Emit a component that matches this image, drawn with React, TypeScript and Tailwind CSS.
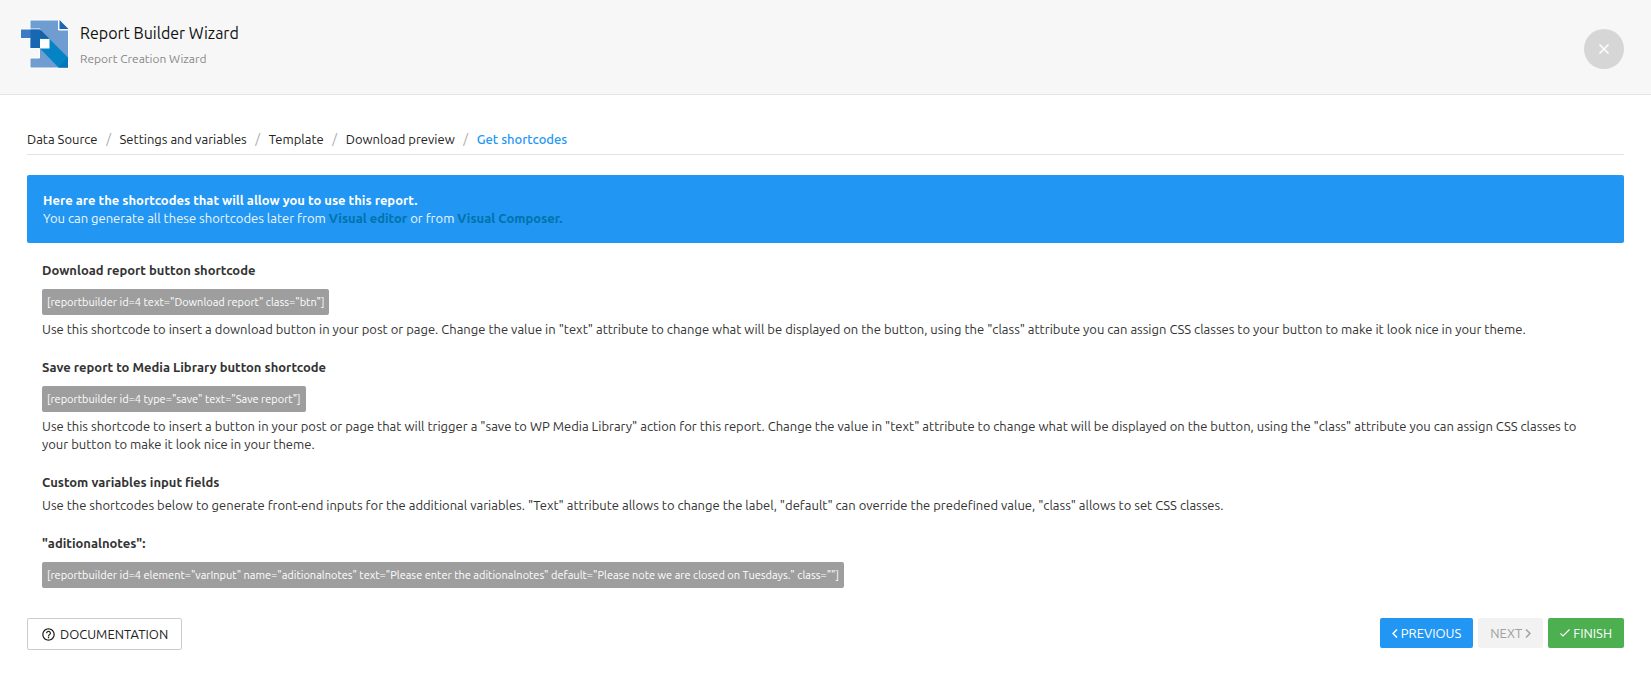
import { clsx } from 'clsx';

const steps = [
  'Data Source',
  'Settings and variables',
  'Template',
  'Download preview',
  'Get shortcodes',
];

const Logo = () => (
  <svg width="50" height="50" viewBox="0 0 50 50" className="shrink-0" aria-hidden="true">
    <path
      d="M10 1h28.500v10H48.500V49H10V39h9.500V29.500H10z"
      fill="#6f9dd1"
      stroke="#fdfeff"
      strokeWidth="1"
    />
    <path d="M39.500 1L48.500 10h-9z" fill="#1767b2" />
    <path d="M20 10.500L48 38.500v10H38.500L20 29.500z" fill="#0583c5" />
    <path d="M48 38.500v10H38.500z" fill="#0b74b8" />
    <path d="M0.500 10h19.500v9.500H0.500z" fill="#3c7cc4" stroke="#fdfeff" strokeWidth="1" />
    <path d="M10.500 10.500h9.500v18.500h-9.500z" fill="#1767b2" />
    <path d="M20 10.500l9 9h-9z" fill="#1464a3" />
    <path d="M20 20h9.500v9.500H20z" fill="#fdfeff" />
  </svg>
);

const CloseIcon = () => (
  <svg width="12" height="12" viewBox="0 0 12 12" fill="none" stroke="#fff" strokeWidth="1.500">
    <path d="M1.500 1.500l9 9M10.500 1.500l-9 9" />
  </svg>
);

const HelpIcon = () => (
  <svg width="15" height="15" viewBox="0 0 24 24" fill="#222">
    <path d="M11 18h2v-2h-2v2zm1-16C6.480 2 2 6.480 2 12s4.480 10 10 10 10-4.480 10-10S17.520 2 12 2zm0 18c-4.410 0-8-3.590-8-8s3.590-8 8-8 8 3.590 8 8-3.590 8-8 8zm0-14c-2.210 0-4 1.790-4 4h2c0-1.100.9-2 2-2s2 .9 2 2c0 2-3 1.750-3 5h2c0-2.250 3-2.500 3-5 0-2.210-1.790-4-4-4z" />
  </svg>
);

const Shortcode = ({ code }: { code: string }) => (
  <code className="inline-block rounded-xs bg-[#9e9e9e] px-[5px] py-1 font-['Ubuntu','Noto_Sans',sans-serif] text-[11px] leading-[18px] text-white">
    {code}
  </code>
);

const Heading = ({ children }: { children: string }) => (
  <h2 className="font-bold">{children}</h2>
);

function App() {
  return (
    <div className="bg-white font-['Ubuntu','Noto_Sans',sans-serif] text-[13px] leading-[18px] text-[#333]">
      <header className="flex items-start justify-between border-b border-[#e5e5e5] bg-[#f7f7f7] pt-[19px] pr-[27px] pb-[25px] pl-5">
        <div className="flex gap-2.5">
          <Logo />
          <div className="pt-0.5">
            <h1 className="text-base leading-6 text-[#111]">Report Builder Wizard</h1>
            <p className="pt-1 text-xs leading-5 text-[#888]">Report Creation Wizard</p>
          </div>
        </div>
        <button
          type="button"
          aria-label="Close"
          className="mt-2.5 flex h-10 w-10 cursor-pointer items-center justify-center rounded-full bg-[#d6d6d6]"
        >
          <CloseIcon />
        </button>
      </header>

      <main className="px-[27px] pt-[35px]">
        <nav className="border-b border-[#e3e3e3] pb-1.5">
          <ol className="flex">
            {steps.map((step, index) => {
              const isActive = index === steps.length - 1;

              return (
                <li key={step} className="flex">
                  {index > 0 && <span className="w-[22px] text-center text-[#aaa]">/</span>}
                  <a href="#" className={clsx(isActive ? 'font-medium text-[#2196f3]' : 'text-[#222]')}>
                    {step}
                  </a>
                </li>
              );
            })}
          </ol>
        </nav>

        <div className="mt-5 rounded-xs bg-[#2196f3] p-4 text-[#eef7ff]">
          <p className="font-bold text-white">
            Here are the shortcodes that will allow you to use this report.
          </p>
          <p>
            You can generate all these shortcodes later from{' '}
            <a href="#" className="font-bold text-[#0073aa]">Visual editor</a> or from{' '}
            <a href="#" className="font-bold text-[#0073aa]">Visual Composer.</a>
          </p>
        </div>

        <div className="pt-[18px] pr-6 pl-[15px]">
          <section>
            <Heading>Download report button shortcode</Heading>
            <div className="flex pt-2.5 pb-[5px]">
              <Shortcode code={'[reportbuilder id=4 text="Download report" class="btn"]'} />
            </div>
            <p>
              Use this shortcode to insert a download button in your post or page. Change the value in "text"
              attribute to change what will be displayed on the button, using the "class" attribute you can
              assign CSS classes to your button to make it look nice in your theme.
            </p>
          </section>

          <section className="pt-5">
            <Heading>Save report to Media Library button shortcode</Heading>
            <div className="flex pt-2.5 pb-[5px]">
              <Shortcode code={'[reportbuilder id=4 type="save" text="Save report"]'} />
            </div>
            <p>
              Use this shortcode to insert a button in your post or page that will trigger a "save to WP Media
              Library" action for this report. Change the value in "text" attribute to change what will be
              displayed on the button, using the "class" attribute you can assign CSS classes to your button to
              make it look nice in your theme.
            </p>
          </section>

          <section className="pt-5">
            <Heading>Custom variables input fields</Heading>
            <p className="pt-[5px]">
              Use the shortcodes below to generate front-end inputs for the additional variables. "Text"
              attribute allows to change the label, "default" can override the predefined value, "class" allows
              to set CSS classes.
            </p>
          </section>

          <section className="pt-5">
            <Heading>"aditionalnotes":</Heading>
            <div className="flex pt-2.5">
              <Shortcode
                code={
                  '[reportbuilder id=4 element="varInput" name="aditionalnotes" text="Please enter the aditionalnotes" default="Please note we are closed on Tuesdays." class=""]'
                }
              />
            </div>
          </section>
        </div>

        <footer className="flex items-start justify-between pt-[30px] pb-7">
          <a
            href="#"
            className="flex h-8 items-center gap-1 rounded-xs border border-[#ccc] px-[13px] text-[#222]"
          >
            <HelpIcon />
            DOCUMENTATION
          </a>
          <div className="flex gap-[5px]">
            <button
              type="button"
              className="flex h-[30px] cursor-pointer items-center gap-[3px] rounded-xs bg-[#2196f3] px-3 text-white"
            >
              <svg width="6" height="9" viewBox="0 0 6 9" fill="none" stroke="currentColor" strokeWidth="1.500">
                <path d="M5 0.500l-4 4 4 4" />
              </svg>
              PREVIOUS
            </button>
            <button
              type="button"
              disabled
              className="flex h-[30px] items-center gap-[3px] rounded-xs bg-[#f2f2f2] px-3 text-[#a0a0a0]"
            >
              NEXT
              <svg width="6" height="9" viewBox="0 0 6 9" fill="none" stroke="currentColor" strokeWidth="1.500">
                <path d="M1 0.500l4 4-4 4" />
              </svg>
            </button>
            <button
              type="button"
              className="flex h-[30px] cursor-pointer items-center gap-[3px] rounded-xs bg-[#4caf50] px-3 text-white"
            >
              <svg width="10" height="8" viewBox="0 0 10 8" fill="none" stroke="currentColor" strokeWidth="1.200">
                <path d="M0.500 4.500l2.500 2.500 6.500-6.500" />
              </svg>
              FINISH
            </button>
          </div>
        </footer>
      </main>
    </div>
  );
}

export default App;
